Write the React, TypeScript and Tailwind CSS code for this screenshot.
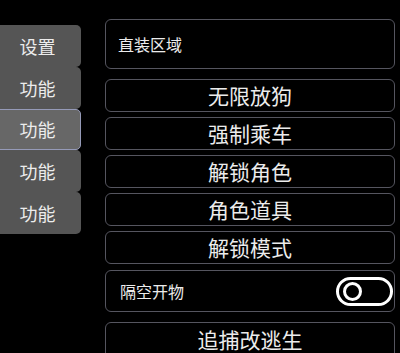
const tabs = [
  { label: "设置", active: false },
  { label: "功能", active: false },
  { label: "功能", active: true },
  { label: "功能", active: false },
  { label: "功能", active: false },
];

const buttons = ["无限放狗", "强制乘车", "解锁角色", "角色道具", "解锁模式"];

const font = { fontFamily: '"Noto Sans CJK SC", "Noto Sans", sans-serif' };

function Toggle() {
  return (
    <div className="flex h-[29px] w-[57px] items-center rounded-full border-[3px] border-white pl-[4px]">
      <div className="h-[19px] w-[19px] rounded-full border-[3px] border-white" />
    </div>
  );
}

export default function App() {
  return (
    <div className="flex h-[353px] w-[400px] overflow-hidden bg-black text-[#ececec]" style={font}>
      {/* Tab rail */}
      <div className="flex w-[81px] shrink-0 flex-col pt-[25px]">
        {tabs.map((t, i) => (
          <div
            key={i}
            className={
              t.active
                ? "-ml-[6px] flex h-[41px] w-[87px] shrink-0 items-center justify-center rounded-[5px] border border-[#959ab8] bg-[#676767] text-[18px]"
                : "-ml-[6px] flex h-[42px] w-[87px] shrink-0 items-center justify-center rounded-[5px] bg-[#555555] text-[18px]"
            }
          >
            {t.label}
          </div>
        ))}
      </div>

      {/* Feature list */}
      <div className="ml-[24px] flex w-[290px] flex-col pt-[19px]">
        <div className="flex h-[50px] shrink-0 items-center rounded-[6px] border border-[#55555f] pl-[12px] text-[16px]">
          直装区域
        </div>
        <div className="mt-[10px] flex shrink-0 flex-col gap-[5px]">
          {buttons.map((b) => (
            <div
              key={b}
              className="flex h-[33px] shrink-0 items-center justify-center rounded-[6px] border border-[#55555f] text-[21px]"
            >
              {b}
            </div>
          ))}
        </div>
        <div className="mt-[6px] flex h-[42px] shrink-0 items-center justify-between rounded-[6px] border border-[#55555f] pl-[14px] pr-[1px] text-[16px]">
          <span>隔空开物</span>
          <Toggle />
        </div>
        <div className="mt-[10px] flex h-[40px] shrink-0 items-start justify-center rounded-[6px] border border-[#55555f] pt-[1px] text-[21px]">
          追捕改逃生
        </div>
      </div>
    </div>
  );
}
